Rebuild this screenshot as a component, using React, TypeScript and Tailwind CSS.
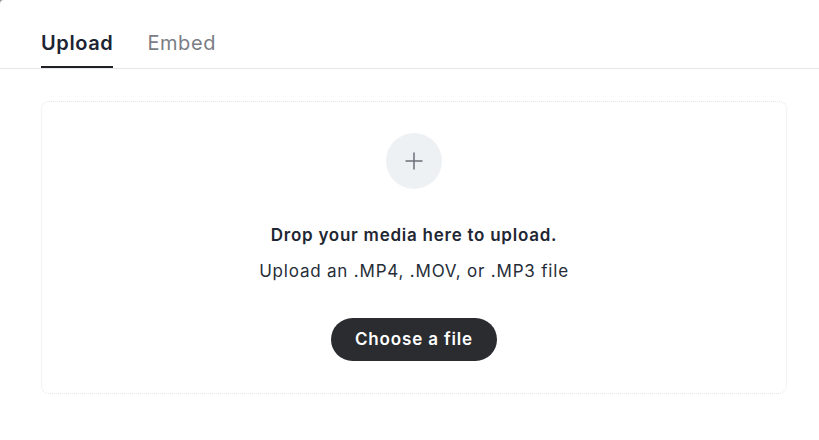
import React, { useState } from 'react';

const tabs = ['Upload', 'Embed'];

export default function App() {
  const [active, setActive] = useState('Upload');

  return (
    <div className="min-h-[440px] w-full bg-[#9a9a9a]" style={{ fontFamily: 'Inter, "Noto Sans", sans-serif' }}>
      <div className="min-h-[440px] w-full bg-white rounded-tl-[4px]">
        <div className="flex gap-[34px] px-[41px] border-b border-[#e5e7eb]">
          {tabs.map(t => (
            <button
              key={t}
              onClick={() => setActive(t)}
              className={
                active === t
                  ? 'pt-[29px] pb-[9px] text-[20px] leading-[28px] tracking-[0.6px] font-semibold text-[#1c2433] border-b-2 border-[#1f2023]'
                  : 'pt-[29px] pb-[9px] text-[20px] leading-[28px] tracking-[0.6px] font-normal text-[#7a7d85] border-b-2 border-transparent'
              }
            >
              {t}
            </button>
          ))}
        </div>

        <div className="ml-[41px] mr-[32px] mt-[32px] h-[293px] rounded-lg border border-dotted border-[#e3e5e8] flex flex-col items-center pt-[31px]">
          <div className="w-14 h-14 rounded-full bg-[#eef1f4] flex items-center justify-center">
            <svg width="18" height="18" viewBox="0 0 18 18" fill="none">
              <path d="M9 0.5V17.5M0.5 9H17.5" stroke="#6b7079" strokeWidth="1.5" />
            </svg>
          </div>
          <p className="mt-[34px] text-[17px] leading-6 tracking-[0.75px] font-semibold text-[#1f2733]">
            Drop your media here to upload.
          </p>
          <p className="mt-[12px] text-[17px] leading-6 tracking-[0.8px] text-[#262d38]">
            Upload an .MP4, .MOV, or .MP3 file
          </p>
          <button className="mt-[35px] h-[43px] px-6 rounded-full bg-[#2a2c30] text-white text-[17px] tracking-[0.85px] font-semibold">
            Choose a file
          </button>
        </div>
      </div>
    </div>
  );
}
